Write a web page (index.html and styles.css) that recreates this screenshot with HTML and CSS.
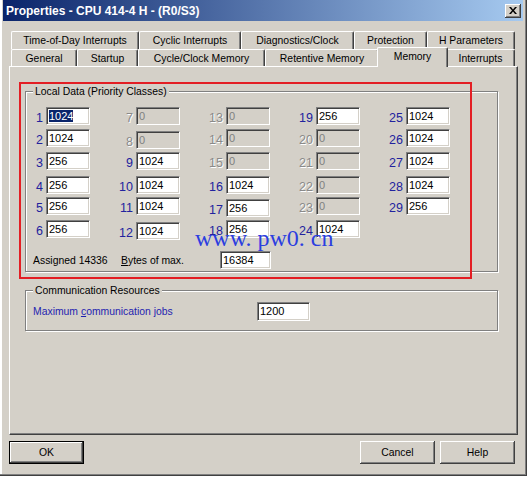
FILE: index.html
```html
<!DOCTYPE html>
<html>
<head>
<meta charset="utf-8">
<link rel="stylesheet" href="styles.css">
</head>
<body>
<div class="window">
  <div class="titlebar">
    <span class="title">Properties - CPU 414-4 H - (R0/S3)</span>
    <span class="close"><svg width="8" height="7" viewBox="0 0 8 7"><path d="M0 0h2l2 2.5L6 0h2L5 3.5 8 7H6L4 4.5 2 7H0l3-3.5z" fill="#000"/></svg></span>
  </div>
  <div class="tabs">
    <div class="tabrow r1">
      <div class="tab w-tod">Time-of-Day Interrupts</div>
      <div class="tab w-cyc">Cyclic Interrupts</div>
      <div class="tab w-diag">Diagnostics/Clock</div>
      <div class="tab w-prot">Protection</div>
      <div class="tab w-hp">H Parameters</div>
    </div>
    <div class="tabrow r2">
      <div class="tab w-gen">General</div>
      <div class="tab w-start">Startup</div>
      <div class="tab w-ccm">Cycle/Clock Memory</div>
      <div class="tab w-ret">Retentive Memory</div>
      <div class="tab w-mem sel">Memory</div>
      <div class="tab w-int">Interrupts</div>
    </div>
  </div>
  <div class="panel">
    <div class="group g1">
      <div class="gtitle">Local Data (Priority Classes)</div>
      <div class="grid">
        <div class="cell"><span class="num">1</span><span class="field"><span class="hl">1024</span></span></div>
        <div class="cell"><span class="num">2</span><span class="field">1024</span></div>
        <div class="cell"><span class="num">3</span><span class="field">256</span></div>
        <div class="cell"><span class="num">4</span><span class="field">256</span></div>
        <div class="cell"><span class="num">5</span><span class="field">256</span></div>
        <div class="cell"><span class="num">6</span><span class="field">256</span></div>

        <div class="cell dis"><span class="num">7</span><span class="field">0</span></div>
        <div class="cell dis low"><span class="num">8</span><span class="field">0</span></div>
        <div class="cell"><span class="num">9</span><span class="field">1024</span></div>
        <div class="cell"><span class="num">10</span><span class="field">1024</span></div>
        <div class="cell"><span class="num">11</span><span class="field">1024</span></div>
        <div class="cell low"><span class="num">12</span><span class="field">1024</span></div>

        <div class="cell dis"><span class="num">13</span><span class="field">0</span></div>
        <div class="cell dis"><span class="num">14</span><span class="field">0</span></div>
        <div class="cell dis"><span class="num">15</span><span class="field">0</span></div>
        <div class="cell"><span class="num">16</span><span class="field">1024</span></div>
        <div class="cell low"><span class="num">17</span><span class="field">256</span></div>
        <div class="cell"><span class="num">18</span><span class="field">256</span></div>

        <div class="cell"><span class="num">19</span><span class="field">256</span></div>
        <div class="cell dis"><span class="num">20</span><span class="field">0</span></div>
        <div class="cell dis"><span class="num">21</span><span class="field">0</span></div>
        <div class="cell dis"><span class="num">22</span><span class="field">0</span></div>
        <div class="cell dis"><span class="num">23</span><span class="field">0</span></div>
        <div class="cell"><span class="num">24</span><span class="field">1024</span></div>

        <div class="cell"><span class="num">25</span><span class="field">1024</span></div>
        <div class="cell"><span class="num">26</span><span class="field">1024</span></div>
        <div class="cell"><span class="num">27</span><span class="field">1024</span></div>
        <div class="cell"><span class="num">28</span><span class="field">1024</span></div>
        <div class="cell"><span class="num">29</span><span class="field">256</span></div>
      </div>
      <div class="assigned">
        <span class="a-lbl">Assigned 14336</span>
        <span class="b-lbl"><u>B</u>ytes of max.</span>
        <span class="field f-max">16384</span>
      </div>
    </div>
    <div class="group g2">
      <div class="gtitle">Communication Resources</div>
      <div class="comm">
        <span class="c-lbl">Maximum <u>c</u>ommunication jobs</span>
        <span class="field f-comm">1200</span>
      </div>
    </div>
    <div class="redbox"></div>
    <div class="watermark">www. pw0. cn</div>
  </div>
  <div class="btns">
    <button class="btn def">OK</button>
    <button class="btn cancel">Cancel</button>
    <button class="btn">Help</button>
  </div>
</div>
</body>
</html>
```
FILE: styles.css
```css
* { box-sizing: border-box; }
html, body { margin: 0; padding: 0; }
body {
  width: 528px;
  height: 477px;
  overflow: hidden;
  background: #ffffff;
  font-family: "Liberation Sans", Arial, sans-serif;
  font-size: 10.4px;
  color: #000;
}
.window {
  width: 527px;
  height: 476px;
  background: #d4d0c8;
  padding: 0 4px 0 3px;
  display: flex;
  flex-direction: column;
  box-shadow: inset -1px -1px 0 #404040, inset -2px -2px 0 #808080, inset 2px 0 0 #fff;
}
.titlebar {
  height: 21px;
  display: flex;
  align-items: center;
  padding: 0 2px 0 2px;
  background: linear-gradient(to right, #0a246a, #a6caf0);
}
.title {
  color: #fff;
  font-weight: bold;
  font-size: 12px;
  margin-left: 1px;
}
.close {
  margin-left: auto;
  width: 16px;
  height: 14px;
  background: #d4d0c8;
  display: flex;
  align-items: center;
  justify-content: center;
  box-shadow: inset -1px -1px 0 #404040, inset 1px 1px 0 #fff, inset -2px -2px 0 #808080;
}
.tabs {
  margin: 10px 0 0 8px;
}
.tabrow {
  display: flex;
  align-items: flex-start;
}
.tab {
  background: #d4d0c8;
  border-top: 1px solid #fff;
  border-left: 1px solid #fff;
  border-right: 1px solid #404040;
  box-shadow: inset -1px 0 0 #808080;
  border-radius: 2px 2px 0 0;
  display: flex;
  align-items: center;
  justify-content: center;
  white-space: nowrap;
}
.r1 .tab { height: 18px; }
.r2 .tab { height: 17px; }
.tab.sel {
  height: 20px;
  margin: -2px -2px -1px -2px;
  position: relative;
  z-index: 2;
  padding-bottom: 3px;
}
.w-tod { width: 128px; }
.w-cyc { width: 102px; }
.w-diag { width: 113px; }
.w-prot { width: 73px; }
.w-hp { width: 88px; }
.w-gen { width: 66px; }
.w-start { width: 61px; }
.w-ccm { width: 127px; }
.w-ret { width: 114px; }
.w-mem.sel { width: 71px; }
.w-int { width: 69px; }

.panel {
  position: relative;
  width: 509px;
  height: 369px;
  margin-left: 6px;
  border-top: 1px solid #fff;
  border-left: 1px solid #fff;
  border-right: 1px solid #404040;
  border-bottom: 1px solid #404040;
  box-shadow: inset -1px -1px 0 #808080;
  padding: 24px 0 0 15px;
}
.group {
  width: 473px;
  border: 1px solid #808080;
  box-shadow: inset 1px 1px 0 #fff, 1px 1px 0 #fff;
  display: flex;
  flex-direction: column;
}
.gtitle {
  width: fit-content;
  margin: -7px 0 0 7px;
  padding: 0 2px;
  line-height: 13px;
  background: #d4d0c8;
}
.g1 { padding-bottom: 2px; }
.grid {
  margin: 9px 0 0 2px;
  display: grid;
  grid-auto-flow: column;
  grid-template-columns: repeat(5, 90px);
  grid-template-rows: 22px 23px 24px 21px 23px 18px;
}
.cell {
  display: flex;
  align-items: flex-start;
}
.cell.low { padding-top: 2px; }
.num {
  width: 15px;
  margin-right: 3px;
  margin-top: 2px;
  text-align: right;
  font-size: 12.5px;
  line-height: 18px;
  color: #22229e;
}
.dis .num {
  color: #8a8a8a;
  text-shadow: 1px 1px 0 #fff;
}
.field {
  display: block;
  width: 44px;
  height: 18px;
  background: #fff;
  border: 1px solid;
  border-color: #808080 #fff #fff #808080;
  box-shadow: inset 1px 1px 0 #404040, inset -1px -1px 0 #d4d0c8;
  font-size: 11px;
  line-height: 16px;
  padding-left: 2px;
  white-space: nowrap;
}
.dis .field {
  background: #d4d0c8;
  color: #808080;
}
.hl {
  background: #0a246a;
  color: #fff;
}
.assigned {
  margin: 13px 0 0 7px;
  display: flex;
  align-items: center;
}
.a-lbl { width: 88px; }
.b-lbl { width: 99px; }
.f-max { width: 51px; }
.g2 {
  margin-top: 18px;
  padding-bottom: 9px;
}
.comm {
  margin: 5px 0 0 7px;
  display: flex;
  align-items: center;
}
.c-lbl {
  width: 224px;
  color: #1f1fb0;
}
.f-comm { width: 53px; height: 19px; line-height: 17px; }
.redbox {
  position: absolute;
  left: 9px;
  top: 15px;
  width: 453px;
  height: 197px;
  border: 2px solid #e31e24;
}
.watermark {
  position: absolute;
  left: 185px;
  top: 159px;
  font-family: "Liberation Serif", "Times New Roman", serif;
  font-size: 24px;
  line-height: 24px;
  color: #2b3ee0;
  white-space: pre;
}
.btns {
  display: flex;
  margin: 6px 8px 0 6px;
  gap: 5px;
}
.btn {
  width: 75px;
  height: 23px;
  padding: 0;
  font-family: inherit;
  font-size: 10.4px;
  color: #000;
  background: #d4d0c8;
  border: none;
  box-shadow: inset -1px -1px 0 #404040, inset 1px 1px 0 #fff, inset -2px -2px 0 #808080;
}
.btn.def {
  border: 1px solid #000;
}
.btn.cancel { margin-left: auto; }
```
